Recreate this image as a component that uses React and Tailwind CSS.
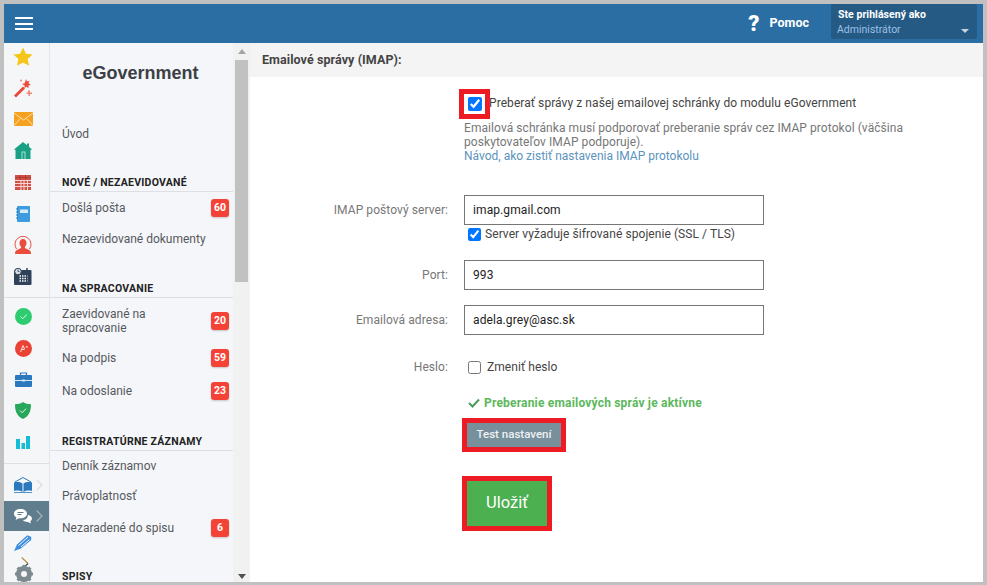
import React from "react";

const F = "font-['Roboto',sans-serif]";

const Star = () => (<svg width="20" height="19" viewBox="0 0 20 19"><path d="M10 0.5l2.900 6.200 6.700.8-5 4.600 1.400 6.600L10 15.400l-6 3.300 1.400-6.600-5-4.600 6.700-.8z" fill="#f5c518"/></svg>);
const Wand = () => (<svg width="20" height="20" viewBox="0 0 20 20"><path d="M1 17.500L10 8.500l2 2-9 9z" fill="#e8483a"/><path d="M13 1l1 2.500 2.500-.8-1 2.600L18 7l-2.600.6.2 2.700-2.200-1.600-2 1.500.3-2.700L9 6l2.600-.7z" fill="#ea4c3e"/><path d="M15 12.500h2v2h2v1.500h-2v2h-1.500v-2h-2v-1.500h1.500z" fill="#ef8a7e"/><circle cx="8" cy="2.500" r="1" fill="#ef8a7e"/></svg>);
const Mail = () => (<svg width="19" height="14" viewBox="0 0 19 14"><rect width="19" height="14" fill="#f5a01e"/><path d="M0 1l9.500 7L19 1M0 13.500l6.500-7M19 13.500l-6.500-7" fill="none" stroke="#fde2b0" strokeWidth="1"/></svg>);
const Home = () => (<svg width="18" height="17" viewBox="0 0 18 17"><path d="M9 0L13 3.200V1.500h2v3.300L18 7.500 16.500 8V17h-15V8L0 7.500z" fill="#18a085"/><rect x="7.500" y="9.500" width="4" height="7.500" fill="#a8dcd0"/><rect x="8.500" y="10.500" width="2" height="6.500" fill="#18a085"/></svg>);
const Grid = () => (<svg width="16" height="15" viewBox="0 0 16 15"><rect width="16" height="15" fill="#cf5148"/><path d="M0 5.500h16M0 8.500h16M0 11.500h16M6 5v10M9 5v10M12.500 5v10" stroke="#f6d5d0" strokeWidth="1"/><path d="M0 2.500h16M5 0v5M10.500 0v5" stroke="#a9362e" strokeWidth=".8"/></svg>);
const Book = () => (<svg width="14" height="16" viewBox="0 0 14 16"><rect x="1" width="13" height="16" rx="1" fill="#3d9be0"/><rect x="4" y="3.500" width="8" height="3.500" fill="#d6ebfa"/><path d="M0 3h2M0 6h2M0 9h2M0 12h2" stroke="#2270ad" strokeWidth="1"/></svg>);
const Person = () => (<svg width="18" height="18" viewBox="0 0 18 18"><path d="M2.500 13A8 8 0 1 1 15.500 13" fill="none" stroke="#ea4c3e" strokeWidth="1"/><path d="M9 3c2.200 0 3.500 1.800 3.500 4 0 1.600-.7 3-1.600 3.700V12l4.600 2.300c.8.400 1.500 1.400 1.500 3.700H1c0-2.300.7-3.300 1.500-3.700L7.100 12v-1.300C6.200 10 5.500 8.600 5.500 7c0-2.200 1.300-4 3.500-4z" fill="#ea4c3e"/></svg>);
const Cal = () => (<svg width="18" height="17" viewBox="0 0 18 17"><rect y="2" width="17.500" height="15" rx="1" fill="#2f4259"/><path d="M13 0v3" stroke="#2f4259" strokeWidth="1.500"/><circle cx="4" cy="3.500" r="3.300" fill="#d8dde3" stroke="#2f4259"/><path d="M4 1.500v2h1.500" stroke="#2f4259" fill="none" strokeWidth=".8"/><path d="M5.500 8h8M5.500 10.500h8M5.500 13h8" stroke="#fff" strokeWidth="1.300" strokeDasharray="1.500 1"/></svg>);
const CheckC = () => (<svg width="17" height="17" viewBox="0 0 17 17"><circle cx="8.500" cy="8.500" r="8.500" fill="#2ecc71"/><path d="M5.500 8.500l2.200 2.300 4-4.300" fill="none" stroke="#e6f9ee" strokeWidth="1"/></svg>);
const CrossC = () => (<svg width="17" height="17" viewBox="0 0 17 17"><circle cx="8.500" cy="8.500" r="8.500" fill="#ea4335"/><path d="M5.500 12L8 5.500l1.500 3.500M11 6l1.500 1.500M12.500 6L11 7.500M7 9.500h2.500" fill="none" stroke="#fbdcd9" strokeWidth="1"/></svg>);
const Case = () => (<svg width="17" height="15" viewBox="0 0 17 15"><path d="M5.500 3V1h6v2" fill="none" stroke="#2a78bd" strokeWidth="1.200"/><rect y="3" width="17" height="12" rx="1" fill="#2a78bd"/><path d="M0 8.500h17" stroke="#d5e7f5" strokeWidth="1"/><rect x="7" y="7.500" width="3" height="2" fill="#d5e7f5"/></svg>);
const Shield = () => (<svg width="16" height="17" viewBox="0 0 16 17"><path d="M8 0c2 1.500 5 2.200 8 2.200 0 6.800-1.800 11.800-8 14.800C1.800 14 0 9 0 2.200 3 2.200 6 1.500 8 0z" fill="#27a85a"/><path d="M5 8.500l2.200 2.200 3.800-4" fill="none" stroke="#e6f9ee" strokeWidth="1"/></svg>);
const Bars = () => (<svg width="14" height="13" viewBox="0 0 14 13"><path d="M0 3h4v10H0zM5.500 7h3.500v6H5.500zM10 0h4v13h-4z" fill="#14bcd6"/></svg>);
const Open = () => (<svg width="18" height="16" viewBox="0 0 18 16"><path d="M1 5L9 .5 17 5" fill="none" stroke="#2a78bd" strokeWidth="1"/><path d="M0 5.500c3-.8 6-.5 8.500 1V15C6 13.500 3 13.200 0 14zM18 5.500c-3-.8-6-.5-8.500 1V15c2.500-1.500 5.500-1.800 8.500-1z" fill="#2a78bd"/><path d="M0 15.500h18" stroke="#2a78bd" strokeWidth=".8"/></svg>);
const Chat = () => (<svg width="18" height="15" viewBox="0 0 18 15"><path d="M6.500 0C2.900 0 0 2 0 4.700c0 1.600 1 3 2.500 3.800L1.500 11l3.500-1.800c.5.100 1 .1 1.500.1 3.600 0 6.500-2 6.500-4.600S10.100 0 6.500 0z" fill="#fff"/><path d="M3.500 3.500h6M3.500 5.500h4" stroke="#5f7d8c" strokeWidth="1"/><path d="M14 6c2.300.5 4 1.900 4 3.600 0 1.100-.7 2-1.700 2.700l.7 2.200-3-1.500c-2.300 0-4.300-.7-5.300-2 3 0 5-1.800 5.300-5z" fill="#fff"/></svg>);
const Pen = () => (<svg width="18" height="16" viewBox="0 0 18 16"><path d="M0 16l3-6.500L13 .5c1.500 0 3 .5 4 1.500.5 1 .5 2-.2 3.200L7 13.500z" fill="#3d8fe0"/><path d="M4.500 10.500L14 2M7 12l8.500-7.500" stroke="#f5f6f8" strokeWidth="1"/></svg>);
const Gear = () => (<svg width="18" height="18" viewBox="0 0 18 18"><circle cx="9" cy="9" r="6" fill="none" stroke="#7d8a8f" strokeWidth="4"/><path d="M9 0v18M0 9h18M2.600 2.600l12.800 12.800M15.400 2.600L2.600 15.400" stroke="#7d8a8f" strokeWidth="3.200"/><circle cx="9" cy="9" r="3" fill="#f5f6f8"/></svg>);
const Chev = ({ c = "#d9dbdd" }) => (<svg width="7" height="12" viewBox="0 0 7 12"><path d="M.7.700L6 6 .7 11.300" fill="none" stroke={c} strokeWidth="1.100"/></svg>);
const ChevTwo = () => (<svg width="8" height="13" viewBox="0 0 8 13"><path d="M.7.500L7 6.500" fill="none" stroke="#c08a4a" strokeWidth="1.200"/><path d="M7 6.500L.7 12.500" fill="none" stroke="#3f4a55" strokeWidth="1.200"/></svg>);

const Rail = ({ children }) => <div className="flex h-[31.4px] w-[45px] shrink-0 items-center justify-center pr-[7px]">{children}</div>;

const Head = ({ children, mt }) => (
  <div className={`${mt} shrink-0 border-b border-[#dcdfe3] pb-[1px] pl-[12px] text-[10.500px] leading-[14px] font-bold tracking-[0.25px] text-[#222]`}>{children}</div>
);
const Item = ({ children, n, h = "h-[31px]" }) => (
  <div className={`flex ${h} shrink-0 items-center justify-between pr-[4px] pl-[12px] text-[12px] leading-[14px] text-[#55595e]`}>
    <span>{children}</span>
    {n && <span className="flex h-[18px] min-w-[18px] items-center justify-center rounded-[3px] bg-[#f44336] px-[3px] text-[10.500px] font-bold text-white shadow-[0_1px_2px_rgba(0,0,0,.2)]">{n}</span>}
  </div>
);

const Label = ({ children }) => <div className="w-[198px] shrink-0 text-right text-[12px] tracking-[0.07px] text-[#777]">{children}</div>;
const Field = ({ value }) => (
  <input readOnly value={value} className="ml-[16px] h-[30px] w-[300px] border border-[#767676] bg-white px-[8px] text-[12px] tracking-[0.1px] text-[#222] outline-none" />
);

export default function App() {
  return (
    <div className={`${F} h-[585px] w-[987px] overflow-hidden bg-[#c0c0c0] pt-[4px] pr-[4px] pb-[3px] pl-[4px]`}>
      <div className="flex h-full flex-col bg-white">
        <header className="flex h-[39px] shrink-0 items-center bg-[#2b6ea3]">
          <div className="ml-[11px] flex w-[18px] flex-col gap-[3.500px]">
            <span className="h-[2px] bg-white" />
            <span className="h-[2px] bg-white" />
            <span className="h-[2px] bg-white" />
          </div>
          <div className="ml-auto flex items-center self-stretch">
            <span className="text-[22px] leading-none font-black text-white">?</span>
            <span className="ml-[10px] text-[12.500px] font-bold text-white">Pomoc</span>
            <div className="relative mr-[6px] ml-[22px] h-[35px] w-[146px] self-start rounded-[2px] bg-[#255a85] pt-[5px] pl-[7px]">
              <div className="text-[10.500px] leading-[12px] font-bold tracking-[0.05px] text-white">Ste prihlásený ako</div>
              <div className="mt-[3px] -ml-[1px] text-[10.500px] leading-[12px] text-[#9cc0e4]">Administrátor</div>
              <span className="absolute top-[25px] right-[8px] h-0 w-0 border-x-[4px] border-t-[4px] border-x-transparent border-t-[#c5d5e2]" />
            </div>
          </div>
        </header>
        <div className="flex min-h-0 flex-1">
          <nav className="flex w-[46px] shrink-0 flex-col overflow-hidden border-r border-[#e4e5e7] bg-[#f5f6f8]">
            <div className="-mt-[2px] flex flex-col">
              <Rail><Star /></Rail><Rail><Wand /></Rail><Rail><Mail /></Rail><Rail><Home /></Rail>
              <Rail><Grid /></Rail><Rail><Book /></Rail><Rail><Person /></Rail><Rail><Cal /></Rail>
            </div>
            <div className="mt-[5px] border-t border-[#dcdfe3] pt-[3px]">
              <Rail><CheckC /></Rail><Rail><CrossC /></Rail><Rail><Case /></Rail><Rail><Shield /></Rail><Rail><Bars /></Rail>
            </div>
            <div className="mt-[5px] border-t border-[#dcdfe3] pt-[4px]">
              <div className="flex h-[33px] items-center gap-[4px] pl-[10px]"><Open /><Chev /></div>
              <div className="flex h-[30px] items-center gap-[4px] bg-[#5f7d8c] pl-[10px]"><Chat /><Chev c="#aab9c1" /></div>
              <div className="flex h-[24px] items-center pl-[10px]"><Pen /></div>
              <div className="relative h-[26px]">
                <span className="absolute top-[2px] left-[17px]"><ChevTwo /></span>
                <span className="absolute top-[10px] left-[11px]"><Gear /></span>
              </div>
            </div>
          </nav>
          <aside className="flex w-[183px] shrink-0 flex-col overflow-hidden bg-[#f5f6f9]">
            <div className="shrink-0 pt-[20px] pr-[2px] text-center font-['Liberation_Sans',sans-serif] text-[18px] leading-[21px] font-bold text-[#3c4045]">eGovernment</div>
            <div className="mt-[34px] shrink-0"><Item>Úvod</Item></div>
            <Head mt="mt-[27px]">NOVÉ / NEZAEVIDOVANÉ</Head>
            <Item n="60" h="h-[32px]">Došlá pošta</Item>
            <Item h="h-[30px]">Nezaevidované dokumenty</Item>
            <Head mt="mt-[28px]">NA SPRACOVANIE</Head>
            <Item n="20" h="h-[45px]">Zaevidované na<br />spracovanie</Item>
            <Item n="59" h="h-[30px]">Na podpis</Item>
            <Item n="23" h="h-[36px]">Na odoslanie</Item>
            <Head mt="mt-[26px]">REGISTRATÚRNE ZÁZNAMY</Head>
            <Item h="h-[30px]">Denník záznamov</Item>
            <Item h="h-[30px]">Právoplatnosť</Item>
            <Item n="6" h="h-[33px]">Nezaradené do spisu</Item>
            <Head mt="mt-[26px]">SPISY</Head>
          </aside>
          <div className="flex w-[17px] shrink-0 flex-col items-center bg-[#f1f1f1]">
            <span className="mt-[6px] h-0 w-0 border-x-[4px] border-b-[5px] border-x-transparent border-b-[#a3a3a3]" />
            <span className="mt-[6px] h-[222px] w-[13px] bg-[#c1c1c1]" />
            <span className="mt-auto mb-[3px] h-0 w-0 border-x-[4px] border-t-[5px] border-x-transparent border-t-[#505050]" />
          </div>
          <main className="min-w-0 flex-1">
            <div className="flex h-[34px] items-center bg-[#f4f4f4] pl-[12px] text-[12.500px] font-bold tracking-[0.08px] text-[#444]">Emailové správy (IMAP):</div>
            <div className="mt-[12px] ml-[209px] flex h-[30px] items-center">
              <div className="flex h-[30px] w-[31px] items-center justify-center border-[5px] border-[#ed1c24]">
                <input type="checkbox" defaultChecked className="h-[14px] w-[14px]" />
              </div>
              <span className="ml-[-1px] pb-[2px] text-[12px] tracking-[0.07px] text-[#444]">Preberať správy z našej emailovej schránky do modulu eGovernment</span>
            </div>
            <div className="mt-[2px] ml-[214px] w-[450px] text-[12px] leading-[14px] tracking-[0.07px] text-[#777]">
              Emailová schránka musí podporovať preberanie správ cez IMAP protokol (väčšina poskytovateľov IMAP podporuje).
              <br />
              <span className="tracking-normal text-[#5b93bd]">Návod, ako zistiť nastavenia IMAP protokolu</span>
            </div>
            <div className="mt-[32px] flex items-center"><Label>IMAP poštový server:</Label><Field value="imap.gmail.com" /></div>
            <div className="mt-[1px] ml-[218px] flex h-[16px] items-center gap-[4px] text-[12px] tracking-[0.07px] text-[#444]">
              <input type="checkbox" defaultChecked className="h-[13px] w-[13px]" />
              Server vyžaduje šifrované spojenie (SSL / TLS)
            </div>
            <div className="mt-[18px] flex items-center"><Label>Port:</Label><Field value="993" /></div>
            <div className="mt-[15px] flex items-center"><Label>Emailová adresa:</Label><Field value="adela.grey@asc.sk" /></div>
            <div className="mt-[22px] flex h-[20px] items-center">
              <Label>Heslo:</Label>
              <input type="checkbox" className="ml-[20px] h-[13px] w-[13px]" />
              <span className="ml-[6px] text-[12px] tracking-[0.07px] text-[#444]">Zmeniť heslo</span>
            </div>
            <div className="mt-[18px] ml-[218px] flex h-[16px] items-center gap-[4px] text-[12px] font-bold tracking-[0.19px] text-[#5cb85c]">
              <svg width="12" height="10" viewBox="0 0 12 10"><path d="M1 5l3.500 3.500L11 1.500" fill="none" stroke="#4a9d5b" strokeWidth="2" /></svg>
              Preberanie emailových správ je aktívne
            </div>
            <div className="mt-[7px] ml-[212px] flex h-[34px] w-[104px] items-center justify-center border-[5px] border-[#ed1c24] bg-[#78909c] text-[11.500px] font-medium text-[#eef2f4]">Test nastavení</div>
            <div className="mt-[24px] ml-[212px] flex h-[55px] w-[90px] items-center justify-center border-[5px] border-[#ed1c24] bg-[#4caf50] text-[16.500px] text-white">Uložiť</div>
          </main>
        </div>
      </div>
    </div>
  );
}
